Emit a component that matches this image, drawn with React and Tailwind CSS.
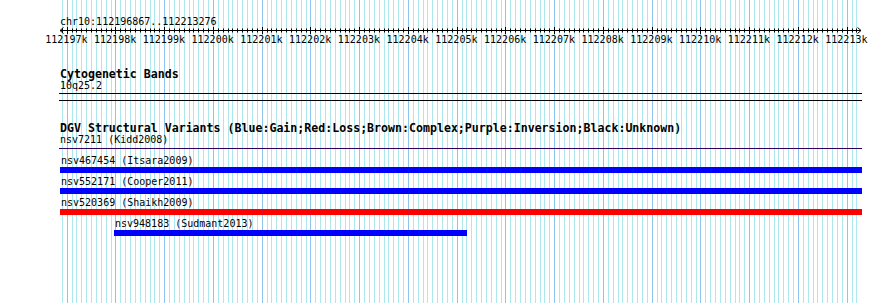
import React from "react";

// view range shown in the ruler
const START = 112196867;
const END = 112213276;
const PX_PER_BP = 0.04875;
const ORIGIN = 60.2; // page x of START

const bpToX = (bp) => ORIGIN + (bp - START) * PX_PER_BP;

const mono = { fontFamily: '"DejaVu Sans Mono", "Liberation Mono", monospace' };

const minorStops = [];
for (let bp = Math.ceil(START / 100) * 100; bp <= END; bp += 100) minorStops.push(bp);

const kbLabels = [];
for (let kb = 112197; kb <= 112213; kb++) kbLabels.push(kb);

const variants = [
  { name: "nsv467454 (Itsara2009)", color: "bg-[#0000ff]", from: START, to: END },
  { name: "nsv552171 (Cooper2011)", color: "bg-[#0000ff]", from: START, to: END },
  { name: "nsv520369 (Shaikh2009)", color: "bg-[#ff0000]", from: START, to: END },
  { name: "nsv948183 (Sudmant2013)", color: "bg-[#0000ff]", from: 112197968, to: 112205168 },
];

function GridLines() {
  return (
    <svg className="absolute inset-0" width="890" height="303">
      {minorStops.map((bp) => {
        const x = Math.round(bpToX(bp)) + 0.5;
        const major = bp % 1000 === 0;
        return (
          <line
            key={bp}
            x1={x}
            x2={x}
            y1={0}
            y2={303}
            stroke={major ? "#8cc6ee" : "#ace8ee"}
            strokeWidth="1"
          />
        );
      })}
    </svg>
  );
}

function Ruler() {
  return (
    <svg width="803" height="9" className="block">
      <line x1="1" x2="802" y1="4.5" y2="4.5" stroke="#000" strokeWidth="1" />
      <path d="M4.5 1.5 L1 4.5 L4.5 7.5" fill="none" stroke="#000" strokeWidth="1" />
      <path d="M798.5 1.5 L802 4.5 L798.5 7.5" fill="none" stroke="#000" strokeWidth="1" />
      {minorStops.map((bp) => {
        const x = Math.round(bpToX(bp)) - 59 + 0.5;
        const major = bp % 1000 === 0;
        return (
          <line
            key={bp}
            x1={x}
            x2={x}
            y1={major ? 1 : 2.5}
            y2={major ? 8 : 6.5}
            stroke="#000"
            strokeWidth="1"
          />
        );
      })}
    </svg>
  );
}

export default function App() {
  return (
    <div className="relative w-[890px] h-[303px] bg-white overflow-hidden text-black" style={mono}>
      <GridLines />
      <div className="relative ml-[59px] w-[803px] pt-[16px]">
        <div className="pl-px text-[10px] leading-[11px]">chr10:112196867..112213276</div>
        <div className="mt-[-1px]">
          <Ruler />
        </div>
        <div className="flex ml-[-17px] mt-[-1px] text-[10px] leading-[11px]">
          {kbLabels.map((kb) => (
            <div key={kb} className="w-[48.75px] shrink-0 text-center">
              {kb}k
            </div>
          ))}
        </div>

        <div className="mt-[23px] pl-px text-[11.6px] leading-[12px] font-bold">Cytogenetic Bands</div>
        <div className="pl-px text-[10px] leading-[11px]">10q25.2</div>
        <div className="mt-[2px] h-px bg-black"></div>
        <div className="mt-[6px] h-px bg-black"></div>

        <div className="mt-[21px] pl-px text-[11.6px] leading-[12px] font-bold whitespace-nowrap">
          DGV Structural Variants (Blue:Gain;Red:Loss;Brown:Complex;Purple:Inversion;Black:Unknown)
        </div>
        <div className="pl-px text-[10px] leading-[11px]">nsv7211 (Kidd2008)</div>
        <div className="mt-[3px] h-px bg-[#300060]"></div>

        <div className="mt-[6px] flex flex-col">
          {variants.map((v) => {
            const left = Math.round(bpToX(v.from)) - 59;
            const width = Math.round(bpToX(v.to)) - 59 - left + 2;
            return (
              <div key={v.name} className="h-[21px]" style={{ paddingLeft: left }}>
                <div className="pl-px text-[10px] leading-[11px] whitespace-nowrap">{v.name}</div>
                <div className={`mt-px h-[6px] ${v.color}`} style={{ width }}></div>
              </div>
            );
          })}
        </div>
      </div>
    </div>
  );
}
